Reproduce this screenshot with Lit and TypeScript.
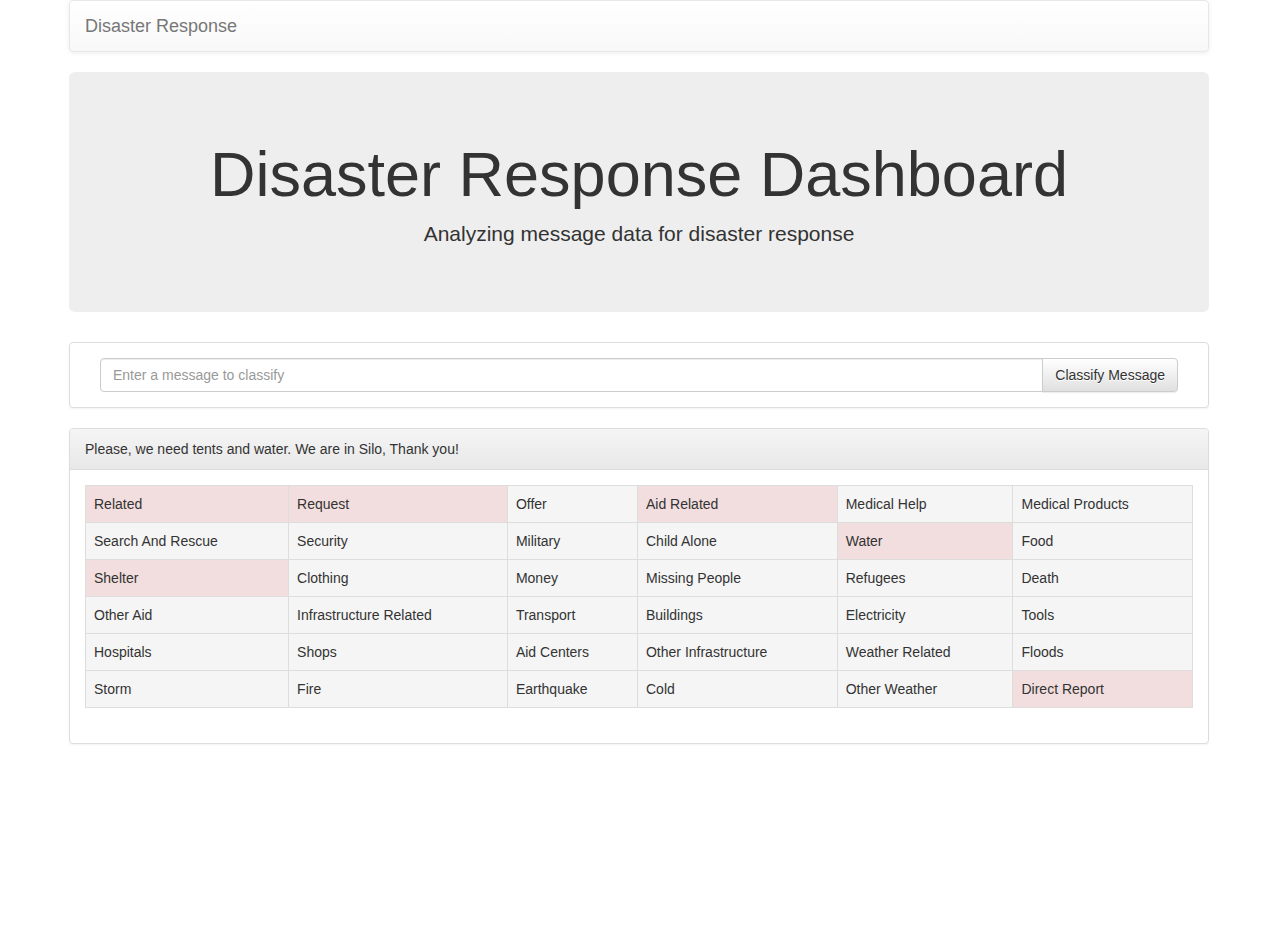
import { LitElement, html, css } from "lit";
import { customElement, property } from "lit/decorators.js";
import { classMap } from "lit/directives/class-map.js";

interface Category {
  name: string;
  matched?: boolean;
}

const ROWS: Category[][] = [
  [
    { name: "Related", matched: true },
    { name: "Request", matched: true },
    { name: "Offer" },
    { name: "Aid Related", matched: true },
    { name: "Medical Help" },
    { name: "Medical Products" },
  ],
  [
    { name: "Search And Rescue" },
    { name: "Security" },
    { name: "Military" },
    { name: "Child Alone" },
    { name: "Water", matched: true },
    { name: "Food" },
  ],
  [
    { name: "Shelter", matched: true },
    { name: "Clothing" },
    { name: "Money" },
    { name: "Missing People" },
    { name: "Refugees" },
    { name: "Death" },
  ],
  [
    { name: "Other Aid" },
    { name: "Infrastructure Related" },
    { name: "Transport" },
    { name: "Buildings" },
    { name: "Electricity" },
    { name: "Tools" },
  ],
  [
    { name: "Hospitals" },
    { name: "Shops" },
    { name: "Aid Centers" },
    { name: "Other Infrastructure" },
    { name: "Weather Related" },
    { name: "Floods" },
  ],
  [
    { name: "Storm" },
    { name: "Fire" },
    { name: "Earthquake" },
    { name: "Cold" },
    { name: "Other Weather" },
    { name: "Direct Report", matched: true },
  ],
];

@customElement("category-table")
export class CategoryTable extends LitElement {
  @property({ attribute: false }) rows: Category[][] = [];

  static styles = css`
    :host {
      display: block;
    }
    .table {
      width: 100%;
      margin: 0 0 20px;
      border-collapse: collapse;
      border: 1px solid #ddd;
    }
    .cell {
      padding: 8px;
      line-height: 20px;
      text-align: left;
      vertical-align: top;
      border: 1px solid #ddd;
      background: #f5f5f5;
    }
    .matched {
      background: #f2dede;
    }
  `;

  render() {
    return html`<table class="table">
      <tbody>
        ${this.rows.map(
          (row) => html`<tr>
            ${row.map(
              (c) => html`<td class=${classMap({ cell: true, matched: !!c.matched })}>${c.name}</td>`
            )}
          </tr>`
        )}
      </tbody>
    </table>`;
  }
}

@customElement("app-root")
export class AppRoot extends LitElement {
  static styles = css`
    :host {
      display: block;
      font: 14px/20px "Liberation Sans", Arial, sans-serif;
      color: #333;
    }
    * {
      box-sizing: border-box;
    }
    .container {
      max-width: 1140px;
      margin: 0 auto;
    }
    .navbar {
      display: flex;
      margin-bottom: 20px;
      border: 1px solid #e7e7e7;
      border-radius: 4px;
      background: linear-gradient(#fff, #f8f8f8);
      box-shadow: inset 0 1px 0 rgba(255, 255, 255, 0.15), 0 1px 5px rgba(0, 0, 0, 0.075);
    }
    .brand {
      padding: 15px;
      font-size: 18px;
      color: #777;
      text-decoration: none;
      text-shadow: 0 1px 0 rgba(255, 255, 255, 0.25);
    }
    .hero {
      padding: 68px 60px 64px;
      margin-bottom: 30px;
      border-radius: 6px;
      background: #eee;
      text-align: center;
    }
    .title {
      margin: 0 0 10px;
      font-size: 63px;
      line-height: 69px;
      font-weight: 500;
    }
    .title {
      font-weight: 400;
    }
    .lead {
      margin: 0;
      font-size: 21px;
      line-height: 29px;
    }
    .panel {
      margin-bottom: 20px;
      border: 1px solid #ddd;
      border-radius: 4px;
      background: #fff;
      box-shadow: 0 1px 2px rgba(0, 0, 0, 0.05);
    }
    .form {
      display: flex;
      padding: 15px 30px;
    }
    .input {
      flex: 1;
      min-width: 0;
      height: 34px;
      padding: 6px 12px;
      font: inherit;
      color: #555;
      border: 1px solid #ccc;
      border-radius: 4px 0 0 4px;
      background: #fff;
      box-shadow: inset 0 1px 1px rgba(0, 0, 0, 0.075);
    }
    .input::placeholder {
      color: #999;
      opacity: 1;
    }
    .button {
      height: 34px;
      margin-left: -1px;
      padding: 6px 12px;
      font: inherit;
      color: #333;
      border: 1px solid #ccc;
      border-radius: 0 4px 4px 0;
      background: linear-gradient(#fff, #e0e0e0);
      text-shadow: 0 1px 0 #fff;
      box-shadow: inset 0 1px 0 rgba(255, 255, 255, 0.15), 0 1px 1px rgba(0, 0, 0, 0.075);
      cursor: pointer;
    }
    .heading {
      margin: 0;
      padding: 10px 15px;
      font-size: 14px;
      font-weight: 400;
      border-bottom: 1px solid #ddd;
      border-radius: 3px 3px 0 0;
      background: linear-gradient(#f5f5f5, #e8e8e8);
    }
    .body {
      padding: 15px;
    }
  `;

  render() {
    return html`
      <div class="container">
        <nav class="navbar"><a class="brand" href="#">Disaster Response</a></nav>
        <header class="hero">
          <h1 class="title">Disaster Response Dashboard</h1>
          <p class="lead">Analyzing message data for disaster response</p>
        </header>
        <form class="panel form" @submit=${(e: Event) => e.preventDefault()}>
          <input
            class="input"
            type="text"
            name="query"
            aria-label="Enter a message to classify"
            placeholder="Enter a message to classify"
          />
          <button class="button" type="submit">Classify Message</button>
        </form>
        <section class="panel">
          <h2 class="heading">Please, we need tents and water. We are in Silo, Thank you!</h2>
          <div class="body"><category-table .rows=${ROWS}></category-table></div>
        </section>
      </div>
    `;
  }
}
